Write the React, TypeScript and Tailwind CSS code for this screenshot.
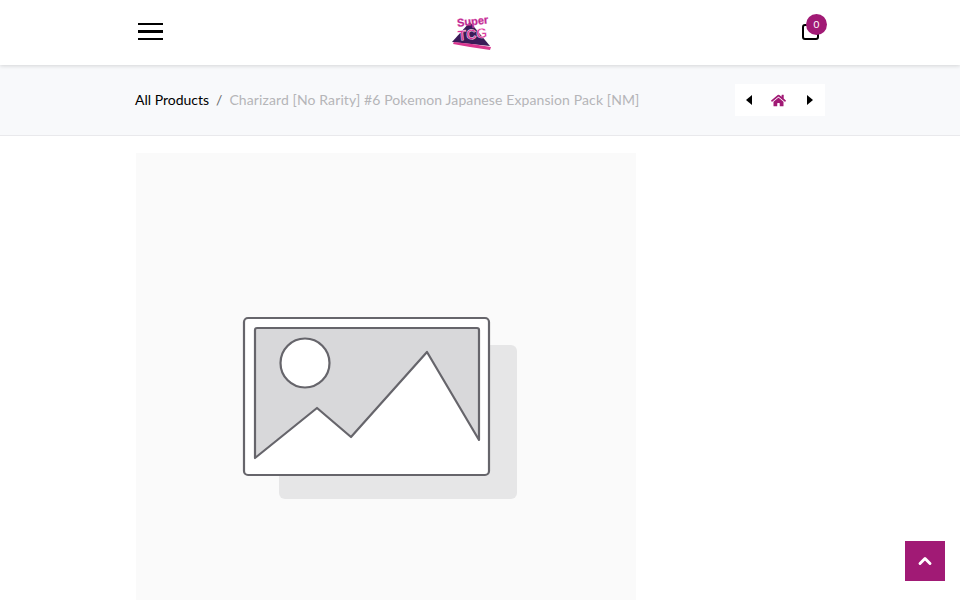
import { ChevronUp } from "lucide-react";
import { FaHome } from "react-icons/fa";

function Logo() {
  return (
    <svg width="44" height="38" viewBox="0 0 44 38" aria-label="logo">
      <polygon points="2,29 20,9 40,33" fill="#3a1a58" />
      <polygon points="4,29 22,31 41,34 40,37 20,34 3,31" fill="#d9368f" />
      <text x="23" y="12" textAnchor="middle" fontFamily="'Liberation Sans', sans-serif" fontWeight="700" fontSize="11" fill="#b01c8a" stroke="#e05ab0" strokeWidth="0.4" transform="rotate(-6 23 12)">
        Super
      </text>
      <text x="23" y="26" textAnchor="middle" fontFamily="'Liberation Sans', sans-serif" fontWeight="700" fontSize="14" fill="#d92a96" stroke="#fff" strokeWidth="0.4" transform="rotate(-6 23 26)">
        TCG
      </text>
    </svg>
  );
}

function Placeholder() {
  return (
    <svg viewBox="0 0 500 500" className="block w-[500px] h-[500px]">
      <rect x="143" y="192" width="238" height="154" rx="6" fill="#e6e6e7" />
      <rect x="108" y="165" width="245" height="157" rx="4" fill="#fff" stroke="#66656b" strokeWidth="2.2" />
      <path
        d="M119 305V177a2 2 0 0 1 2-2H341a2 2 0 0 1 2 2V287L291 199L215 284L181 255Z"
        fill="#d8d8da"
        stroke="#66656b"
        strokeWidth="2.2"
        strokeLinejoin="round"
      />
      <circle cx="169" cy="210" r="24.5" fill="#fff" stroke="#66656b" strokeWidth="2.2" />
    </svg>
  );
}

function Triangle({ dir }: { dir: "left" | "right" }) {
  return (
    <svg width="6" height="10" viewBox="0 0 6 10">
      <polygon points={dir === "left" ? "6,0 6,10 0,5" : "0,0 0,10 6,5"} fill="#000" />
    </svg>
  );
}

export default function App() {
  return (
    <div className="relative h-[600px] overflow-hidden bg-white font-['Lato',sans-serif]">
      <header className="relative z-10 h-[65px] bg-white shadow-[0_1px_4px_rgba(0,0,0,0.15)]">
        <div className="mx-auto grid h-full w-[690px] grid-cols-[1fr_44px_1fr] items-center">
          <div className="flex w-[28px] flex-col gap-[5px] pl-[3px] pb-[2px]">
            <span className="h-[2.5px] w-[25px] bg-black" />
            <span className="h-[2.5px] w-[25px] bg-black" />
            <span className="h-[2.5px] w-[25px] bg-black" />
          </div>
          <div className="-ml-[8px] pb-[1px]">
            <Logo />
          </div>
          <div className="relative mr-[5px] mb-[3px] h-[18px] w-[18px] justify-self-end">
            <div className="absolute bottom-0 left-0 h-[16px] w-[17px] rounded-[3px] border-2 border-black" />
            <div className="absolute -top-[8px] left-[4px] flex h-[21px] w-[21px] items-center justify-center rounded-full bg-[#a11a75] text-[10px] text-white">
              0
            </div>
          </div>
        </div>
      </header>

      <div className="h-[71px] border-b border-[#e9e9ec] bg-[#f8f9fb]">
        <div className="mx-auto flex h-full w-[690px] items-center justify-between">
          <div className="flex items-center pb-[2px] text-[14px]">
            <span className="text-black">All Products</span>
            <span className="mx-[7px] text-[#666]">/</span>
            <span className="tracking-[0.11px] text-[#b5b5b8]">Charizard [No Rarity] #6 Pokemon Japanese Expansion Pack [NM]</span>
          </div>
          <div className="flex h-[32px] w-[90px] items-center justify-between bg-white pr-[12px] pl-[11px]">
            <Triangle dir="left" />
            <FaHome size={15} color="#a11a75" className="-ml-[2px]" />
            <Triangle dir="right" />
          </div>
        </div>
      </div>

      <div className="mx-auto mt-[17px] w-[690px]">
        <div className="ml-[1px] h-[500px] w-[500px] bg-[#fafafa]">
          <Placeholder />
        </div>
      </div>

      <button className="absolute right-[15px] bottom-[19px] flex h-[40px] w-[40px] items-center justify-center bg-[#a11a75] text-white">
        <ChevronUp size={20} strokeWidth={3.5} />
      </button>
    </div>
  );
}
